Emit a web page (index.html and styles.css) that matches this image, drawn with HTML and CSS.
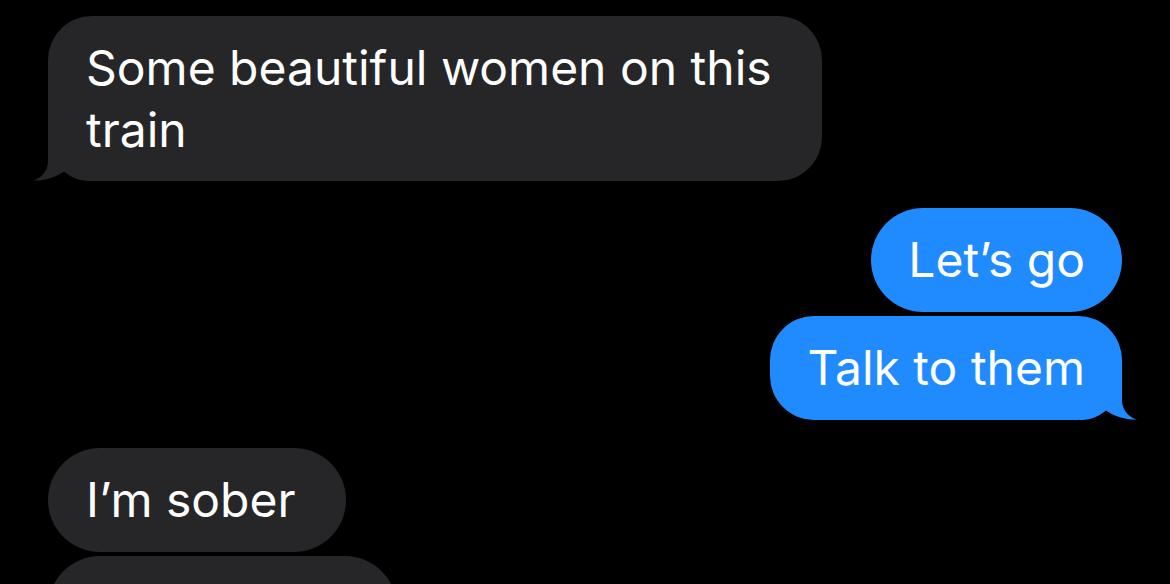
FILE: index.html
```html
<!DOCTYPE html>
<html lang="en">
<head>
<meta charset="utf-8">
<title>Messages</title>
<link rel="stylesheet" href="styles.css">
</head>
<body>
<main class="thread">
  <section class="group incoming">
    <div class="bubble tail multi">
      <p class="text">Some beautiful women on this<br>train</p>
      <svg class="tail-shape" viewBox="0 0 60 44" width="60" height="44" aria-hidden="true"><path d="M18 0 L18 24 C18 35 10 42 3 43.5 C13 44 25 41 34 34.5 C41 40 48 44 60 44 L60 0 Z"/></svg>
    </div>
  </section>
  <section class="group outgoing">
    <div class="bubble"><p class="text">Let’s go</p></div>
    <div class="bubble tail">
      <p class="text">Talk to them</p>
      <svg class="tail-shape" viewBox="0 0 60 44" width="60" height="44" aria-hidden="true"><path d="M18 0 L18 24 C18 35 10 42 3 43.5 C13 44 25 41 34 34.5 C41 40 48 44 60 44 L60 0 Z"/></svg>
    </div>
  </section>
  <section class="group incoming later">
    <div class="bubble"><p class="text">I’m sober</p></div>
    <div class="bubble typing"></div>
  </section>
</main>
</body>
</html>
```
FILE: styles.css
```css
html, body {
  margin: 0;
  padding: 0;
  background: #000;
  height: 100%;
  overflow: hidden;
}

.thread {
  display: flex;
  flex-direction: column;
  gap: 27px;
  padding: 16px 48px 0 48px;
  font-family: Inter, "Noto Sans", "Liberation Sans", sans-serif;
  color: #fff;
}

.group {
  display: flex;
  flex-direction: column;
  gap: 4px;
}

.group.later { margin-top: 1px; }

.group.incoming { align-items: flex-start; }
.group.outgoing { align-items: flex-end; }

.bubble {
  position: relative;
  border-radius: 52px;
  padding: 21px 37px 21px 37px;
  max-width: 790px;
}

.incoming .bubble {
  background: #262629;
  padding-left: 38px;
  padding-right: 50px;
}

.outgoing .bubble { background: #1f8bff; }

.bubble.tail { border-radius: 44px; }
.incoming .bubble.multi { padding-bottom: 20px; }

.bubble.typing {
  width: 349px;
  height: 104px;
  padding: 0;
  box-sizing: border-box;
}

.text {
  margin: 0;
  font-size: 48px;
  line-height: 62px;
  position: relative;
  z-index: 1;
}

.tail-shape {
  position: absolute;
  bottom: 0;
  display: block;
}

.incoming .tail-shape {
  left: -18px;
  fill: #262629;
}

.outgoing .tail-shape {
  right: -18px;
  fill: #1f8bff;
  transform: scaleX(-1);
}
```
